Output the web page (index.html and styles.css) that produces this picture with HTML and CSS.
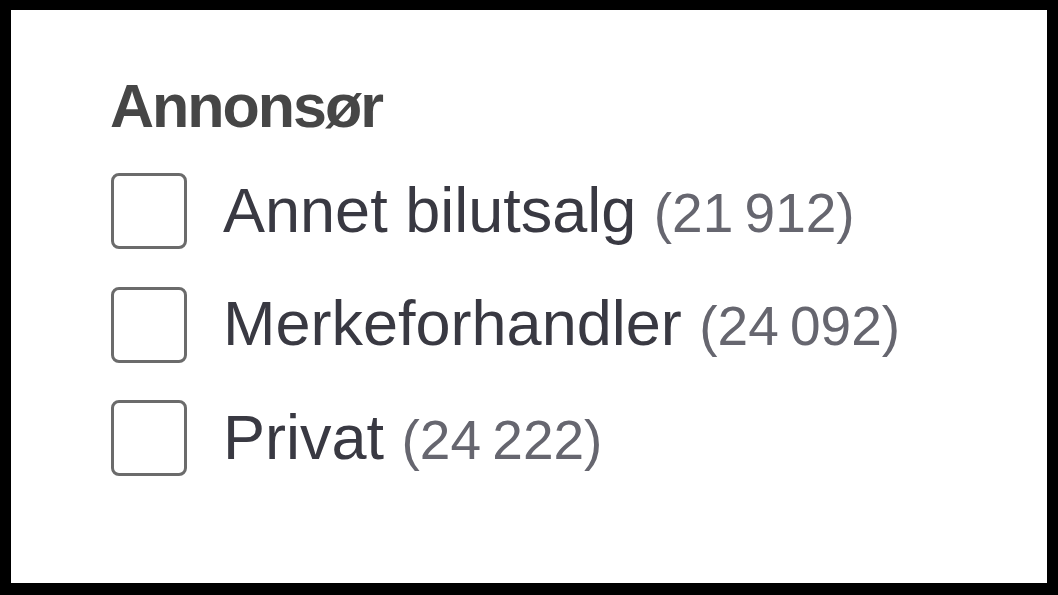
FILE: index.html
```html
<!DOCTYPE html>
<html lang="no">
<head>
<meta charset="utf-8">
<title>Annonsør</title>
<link rel="stylesheet" href="styles.css">
</head>
<body>
<div class="card">
  <h2 class="title">Annonsør</h2>
  <ul class="options">
    <li class="option"><span class="box"></span><span class="label">Annet bilutsalg <span class="count">(21 912)</span></span></li>
    <li class="option"><span class="box"></span><span class="label">Merkeforhandler <span class="count">(24 092)</span></span></li>
    <li class="option"><span class="box"></span><span class="label">Privat <span class="count">(24 222)</span></span></li>
  </ul>
</div>
</body>
</html>
```
FILE: styles.css
```css
html, body {
  margin: 0;
  padding: 0;
  background: #000;
  width: 1058px;
  height: 595px;
  overflow: hidden;
}
body {
  padding: 10px 11px 12px 11px;
  box-sizing: border-box;
  font-family: "Liberation Sans", Arial, sans-serif;
}
.card {
  background: #fff;
  height: 573px;
  box-sizing: border-box;
  padding: 61px 0 0 99px;
}
.title {
  margin: 0;
  font-size: 61px;
  line-height: 70px;
  font-weight: 700;
  letter-spacing: -2px;
  color: #464646;
}
.options {
  list-style: none;
  margin: 32px 0 0 0;
  padding: 0;
  display: flex;
  flex-direction: column;
  gap: 37.5px;
}
.option {
  display: flex;
  align-items: center;
  gap: 36px;
  height: 76px;
}
.box {
  flex: none;
  width: 76px;
  height: 76px;
  box-sizing: border-box;
  border: 3px solid #6b6b6b;
  border-radius: 8px;
  margin-left: 1px;
}
.label {
  font-size: 63px;
  line-height: 76px;
  color: #393942;
  white-space: nowrap;
}
.count {
  font-size: 55px;
  color: #66666f;
  word-spacing: -4px;
}
```
